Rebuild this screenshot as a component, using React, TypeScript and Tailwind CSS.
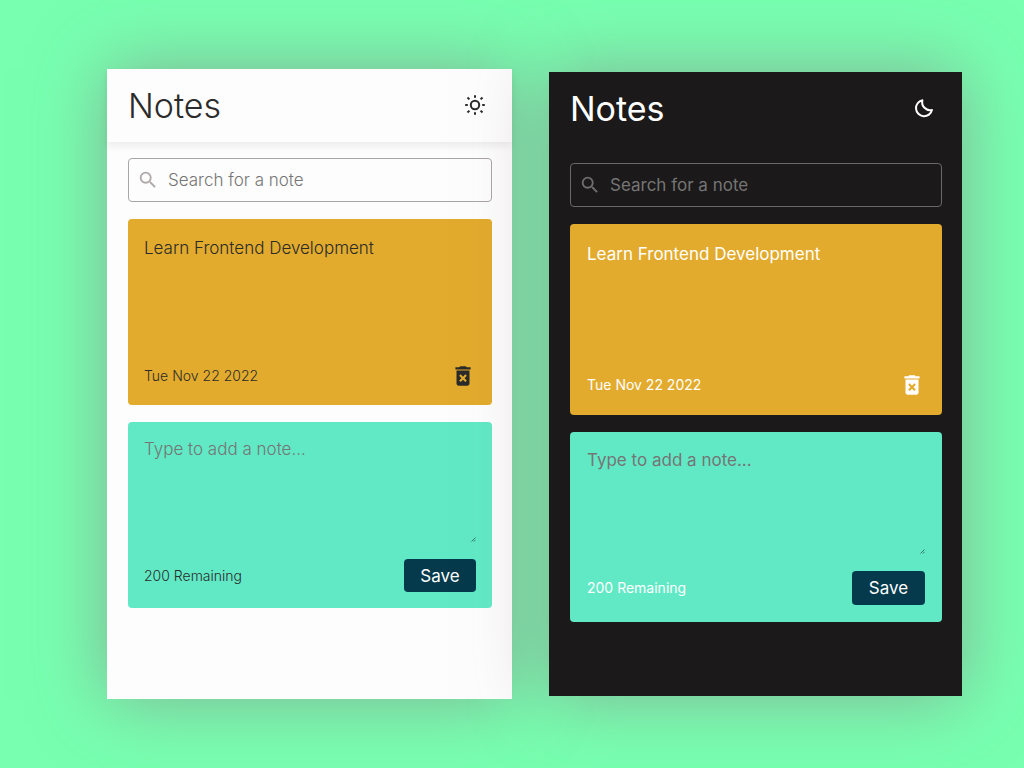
import { useState } from "react";
import { MdDeleteForever, MdSearch } from "react-icons/md";
import { twMerge } from "tailwind-merge";

type Theme = {
  name: string;
  dark: boolean;
  panel: string;
  header: string;
  title: string;
  search: string;
  searchIcon: string;
  noteCard: string;
  formCard: string;
  save: string;
};

const light: Theme = {
  name: "light",
  dark: false,
  panel: "flex-[405] bg-[#fdfdfd] pb-[91px] font-light text-[#2b2b2b]",
  header: "h-[73px] pr-5 shadow-[0_4px_8px_rgba(0,0,0,0.07)]",
  title: "font-[350]",
  search: "mt-4 border-[#aaa5a5]",
  searchIcon: "text-[#b0a9a9]",
  noteCard: "h-[186px] p-4",
  formCard: "h-[186px] p-4",
  save: "h-[33px] w-[72px]",
};

const night: Theme = {
  name: "dark",
  dark: true,
  panel: "flex-[413] bg-[#1b1919] pb-[74px] text-white",
  header: "h-[73px] pr-[21px]",
  title: "font-normal",
  search: "mt-[18px] border-[#6a6868]",
  searchIcon: "text-[#6f6d6d]",
  noteCard: "h-[191px] p-[17px]",
  formCard: "h-[190px] p-[17px]",
  save: "h-[34px] w-[73px]",
};

const LIMIT = 200;

function SunIcon() {
  return (
    <svg
      aria-hidden="true"
      viewBox="0 0 24 24"
      className="size-6"
      fill="none"
      stroke="currentColor"
      strokeWidth="2"
    >
      <circle cx="12" cy="12" r="4.2" />
      <path d="M12 2.2v2.6M12 19.2v2.6M2.2 12h2.6M19.2 12h2.6M4.5 4.5l1.9 1.9M17.6 17.6l1.9 1.9M4.5 19.5l1.9-1.9M17.6 6.4l1.9-1.9" />
    </svg>
  );
}

function MoonIcon() {
  return (
    <svg
      aria-hidden="true"
      viewBox="0 0 24 24"
      className="size-6"
      fill="none"
      stroke="currentColor"
      strokeWidth="2"
      strokeLinejoin="round"
    >
      <path d="M10.4 4.2A8.1 8.1 0 1 0 20 13.9A8 8 0 0 1 10.4 4.2Z" />
    </svg>
  );
}

function NotesPanel({ theme }: { theme: Theme }) {
  const [text, setText] = useState("");
  const searchId = `search-${theme.name}`;
  const noteId = `note-${theme.name}`;

  return (
    <section
      className={twMerge(
        "min-w-0 shadow-[0_0_68px_rgba(140,105,125,0.52)]",
        theme.panel,
      )}
    >
      <header
        className={twMerge("flex items-center justify-between pl-[21px]", theme.header)}
      >
        <h1 className={twMerge("text-[34px] leading-10", theme.title)}>Notes</h1>
        <button type="button" aria-label="Toggle theme" className="px-[5px] pt-1 pb-1.5">
          {theme.dark ? <MoonIcon /> : <SunIcon />}
        </button>
      </header>

      <div className="pr-5 pl-[21px]">
        <div
          className={twMerge(
            "flex h-11 items-center gap-[9px] rounded border px-2",
            theme.search,
          )}
        >
          <label htmlFor={searchId} aria-label="Search notes">
            <MdSearch size={22} className={theme.searchIcon} />
          </label>
          <input
            id={searchId}
            type="text"
            placeholder="Search for a note"
            className="w-full min-w-0 bg-transparent pt-0.5 text-[17px] outline-none placeholder:text-[#757575]"
          />
        </div>

        <article
          className={twMerge(
            "mt-[17px] flex flex-col justify-between rounded bg-[#e2ab2d]",
            theme.noteCard,
          )}
        >
          <p className="text-[17px] leading-[27px]">Learn Frontend Development</p>
          <footer className="flex items-center justify-between">
            <time dateTime="2022-11-22" className="text-sm">
              Tue Nov 22 2022
            </time>
            <button type="button" aria-label="Delete note">
              <MdDeleteForever size={26} />
            </button>
          </footer>
        </article>

        <form
          onSubmit={(event) => event.preventDefault()}
          className={twMerge(
            "mt-[17px] flex flex-col rounded bg-[#61e9c5]",
            theme.formCard,
          )}
        >
          <div className="relative mb-4 flex grow">
            <textarea
              id={noteId}
              aria-label="New note"
              maxLength={LIMIT}
              value={text}
              onChange={(event) => setText(event.target.value)}
              placeholder="Type to add a note..."
              className="w-full resize-none bg-transparent text-[17px] leading-[23px] outline-none placeholder:text-[#757575]"
            />
            <svg
              aria-hidden="true"
              viewBox="0 0 5 5"
              className="absolute right-0 bottom-px size-[5px] text-[#2c5a50]"
              fill="none"
              stroke="currentColor"
              strokeWidth="0.8"
            >
              <path d="M0.5 4.5L4.5 0.5M2.8 4.6L4.6 2.8" />
            </svg>
          </div>
          <footer className="flex items-center justify-between">
            <label htmlFor={noteId} className="text-sm">
              {LIMIT - text.length} Remaining
            </label>
            <button
              type="submit"
              className={twMerge(
                "rounded bg-[#043a4c] pt-0.5 text-[17px] font-normal text-white",
                theme.save,
              )}
            >
              Save
            </button>
          </footer>
        </form>
      </div>
    </section>
  );
}

export default function App() {
  return (
    <main className="flex min-h-screen items-center gap-[37px] bg-[#78ffb0] pr-[62px] pl-[107px] font-['Inter',sans-serif]">
      <NotesPanel theme={light} />
      <NotesPanel theme={night} />
    </main>
  );
}
